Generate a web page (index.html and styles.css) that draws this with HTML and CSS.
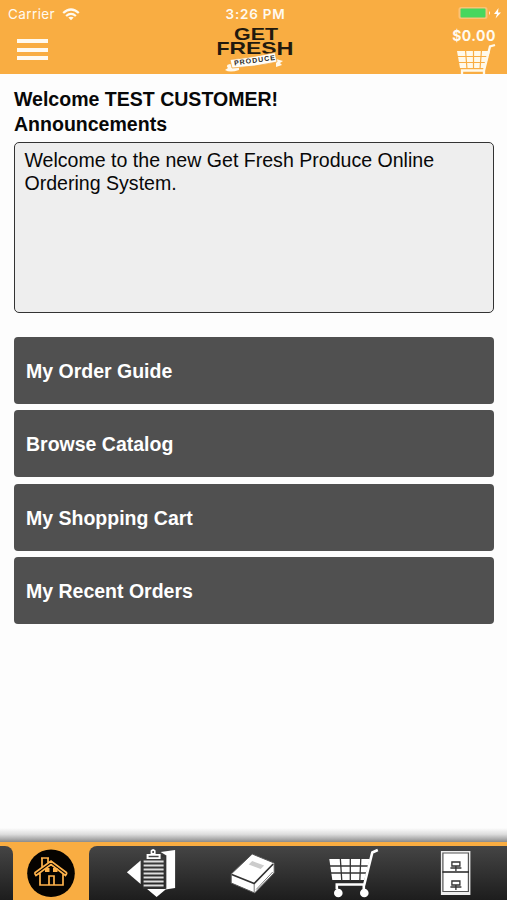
FILE: index.html
```
<!DOCTYPE html>
<html lang="en">
<head>
<meta charset="utf-8">
<title>Get Fresh Produce</title>
<link rel="stylesheet" href="styles.css">
</head>
<body>
<div class="app">
  <header class="header">
    <div class="side side-left">
      <div class="carrier"><span class="carrier-name">Carrier</span>
        <svg class="wifi" width="18" height="13" viewBox="0 0 18 13" fill="none" stroke="#fffaf0" stroke-width="2.3"><path d="M1.2 5Q9-2 16.8 5M4.1 8Q9 3.8 13.9 8"/><path d="M6.3 9.5Q9 7.8 11.7 9.5L9 12.3Z" fill="#fffaf0" stroke="none"/></svg>
      </div>
      <div class="menu"><i></i><i></i><i></i></div>
    </div>
    <div class="center">
      <div class="clock">3:26 PM</div>
      <svg class="logo" width="84" height="50" viewBox="214 24 84 50">
        <g fill="#22190e" font-family="Liberation Sans" font-weight="700">
          <text x="234" y="39.500" font-size="17" textLength="44" lengthAdjust="spacingAndGlyphs">GET</text>
          <text x="216.500" y="54.500" font-size="19" textLength="13" lengthAdjust="spacingAndGlyphs">F</text>
          <text x="229.500" y="54" font-size="17" textLength="47" lengthAdjust="spacingAndGlyphs">RES</text>
          <text x="276.500" y="54.500" font-size="19" textLength="17" lengthAdjust="spacingAndGlyphs">H</text>
        </g>
        <path d="M230 64Q225 65 228 68L225 70Q230 73 239 70V65ZM276 59L283 61L280 63L282 65L276 67Z" fill="#fff9ec"/>
        <path d="M230 59.500Q245 58.500 275 52.500L277 62Q255 67 232 68Z" fill="#fffdf7" stroke="#f1a743" stroke-width=".8"/>
        <text transform="translate(234.500 65.500) rotate(-8)" font-family="Liberation Sans" font-weight="700" font-size="7" fill="#2c2925" textLength="41">PRODUCE</text>
      </svg>
    </div>
    <div class="side side-right">
      <svg class="battery" width="45" height="14" viewBox="457 6 45 14"><rect x="458.500" y="7" width="29" height="12" rx="2.500" fill="#fbc276"/><rect x="460.500" y="8.500" width="25" height="9" rx="1" fill="#46d75e"/><path d="M489 11q2 2 0 4z" fill="#fff2dc"/><path d="M498.500 8L494 14H497L495.500 18.500L501 12.500H498Z" fill="#fff"/></svg>
      <div class="total">$0.00</div>
      <svg class="header-cart" width="42" height="31" viewBox="455 43 42 31"><path d="M457 51H490L485 68H460Z" fill="#fff9ea"/><path d="M457 56.500H489M458 62.500H488M465.500 50L467 69M473.500 50V69M481.500 50L480 69" stroke="#f9ad42" stroke-width="1.200"/><path d="M495 45L490 46.500L484 70.500H462V74M484 70V74" fill="none" stroke="#fff9ea" stroke-width="2.300"/></svg>
    </div>
  </header>
  <main class="main">
    <h1 class="title">Welcome TEST CUSTOMER!</h1>
    <h2 class="title">Announcements</h2>
    <div class="notice">Welcome to the new Get Fresh Produce Online<br>Ordering System.</div>
    <nav class="links">
      <a class="link">My Order Guide</a>
      <a class="link">Browse Catalog</a>
      <a class="link">My Shopping Cart</a>
      <a class="link">My Recent Orders</a>
    </nav>
  </main>
  <div class="fade"></div>
  <footer class="tabs">
    <div class="tab active">
      <span class="edge edge-left"></span>
      <svg class="home" width="76" height="54" viewBox="13 846 76 54"><circle cx="51" cy="873.300" r="23.800" fill="#050300"/><g fill="none" stroke="#ffb34b" stroke-width="1.700"><path d="M40 873V885H63V873M34.500 873L51 861L67 873M34.500 873L36 875.500L51 864.500L65.500 875.500L67 873M42 867V858H48V863M41 858H49M49 885V876H54V885"/><path d="M45 868H49.500V872H45ZM53 868H57.500V872H53Z" fill="#ffb34b" stroke="none"/></g></svg>
      <span class="edge edge-right"></span>
    </div>
    <div class="tab"><svg viewBox="101.400 846 101.400 54"><path d="M127.300 872.300L141 860.500V884Z" fill="#fff"/><path d="M161 852L175.500 850V888L166 889.500L157 897L147.500 889H166V855Z" fill="#fff"/><path d="M162 856H166V888H144V861" fill="none" stroke="#333" stroke-width="1.500"/><path d="M144 861.500H164M144 865.500H164M144 869.500H164M144 873.500H164M144 877.500H164M144 881.500H164M144 885.500H164" stroke="#dedede" stroke-width="2.200"/><path d="M147 854H151V850.500Q153.500 847.500 156 850.500V854H161V859H147Z" fill="#fff"/><path d="M149 856.500H159" stroke="#444" stroke-width="1.500"/><circle cx="153.500" cy="852" r="1" fill="#333"/></svg></div>
    <div class="tab"><svg viewBox="202.800 846 101.400 54"><path d="M231 874L252 854L274 863V873L254.500 893L231 883Z" fill="#fff" stroke="#555" stroke-width="1"/><path d="M231.500 874.500L254 883.500L273 864" fill="none" stroke="#333" stroke-width="1.700"/><path d="M254 884V892M256 889.500L272.500 872" stroke="#777" stroke-width="1"/><path d="M252 861L264 865.500L260.500 869L248.500 864.500Z" fill="#ccc"/></svg></div>
    <div class="tab"><svg viewBox="304.200 846 101.400 54"><path d="M329.500 859H370L364.500 880H332.500Z" fill="#fff"/><path d="M329 866H370M330 873H368M340.500 858L342 881M350.500 858V881M361 858L360 881" stroke="#343434" stroke-width="1.300"/><path d="M378 850L372.500 852.500L364.500 884.500H337V889M364 884V889" fill="none" stroke="#fff" stroke-width="2.600"/><circle cx="338.500" cy="893" r="4.300" fill="#fff"/><circle cx="364.500" cy="893" r="4.300" fill="#fff"/></svg></div>
    <div class="tab"><svg viewBox="405.600 846 101.400 54"><path d="M440.500 851H470V895H440.500Z" fill="#eee"/><path d="M442.500 853H468V891.500H442.500Z" fill="#fff" stroke="#555" stroke-width="1.200"/><path d="M442 872H468.500" stroke="#222" stroke-width="1.500"/><g fill="none" stroke="#333" stroke-width="1.300"><path d="M451.500 862H459.500V866H451.500ZM450 868H461M455.500 866V871M451.500 881H459.500V885H451.500ZM450 887H461M455.500 885V890"/></g></svg></div>
  </footer>
</div>
</body>
</html>
```

FILE: styles.css
```
* { box-sizing: border-box; }
body { margin: 0; background: #fdfdfd; font-family: "Liberation Sans", Arial, sans-serif; color: #080808; }
svg { display: block; }
.app { height: 900px; display: flex; flex-direction: column; }
.header { height: 74px; background: #f9ad42; display: flex; justify-content: space-between; color: #fffaf0; }
.side { width: 150px; }
.side-left { padding: 6px 0 0 8px; }
.carrier { display: flex; height: 16px; align-items: center; gap: 6px; font: 13.5px/16px Inter, sans-serif; letter-spacing: .4px; }
.carrier-name { width: 48px; white-space: nowrap; }
.menu { width: 31px; margin: 17px 0 0 9px; display: grid; gap: 4.500px; }
.menu i { height: 4px; background: #fffaf0; }
.center { width: 84px; margin-left: 4px; display: flex; flex-direction: column; align-items: center; }
.clock { height: 24px; padding-top: 4px; font: 600 13.500px/20px Inter, sans-serif; white-space: nowrap; letter-spacing: .75px; }
.side-right { display: flex; flex-direction: column; align-items: flex-end; padding-top: 6px; }
.battery { margin-right: 5px; }
.total { height: 23px; margin-right: 11px; font: 700 14px/31px Inter, sans-serif; letter-spacing: .5px; }
.header-cart { margin-right: 10px; }
.main { flex: 1; padding: 13px 13px 0 14px; }
.title { margin: 0; font-size: 19.550px; line-height: 24.500px; white-space: nowrap; }
.notice { height: 171px; margin-top: 5.500px; padding: 6px 9.500px; border: 1.500px solid #333; border-radius: 5px; background: #eee; font-size: 19.570px; line-height: 23px; white-space: nowrap; }
.links { margin-top: 24.500px; display: grid; gap: 6.400px; }
.link { height: 67px; padding: 2px 12px 0; display: flex; align-items: center; border-radius: 4px; background: #505050; color: #fff; font-size: 19.500px; font-weight: 700; }
.fade { height: 14px; background: linear-gradient(#fdfdfd, #ddd 45%, #8c8c8c); }
.tabs { height: 58px; padding-top: 4px; display: grid; grid-template-columns: repeat(5, 1fr); background: #f9ad42; }
.tab { background: linear-gradient(#454545, #1d1d1d); }
.tab svg { width: 100%; height: 54px; }
.tab.active { display: flex; background: none; }
.tab.active .home { width: 76px; }
.edge { background: linear-gradient(#454545, #1d1d1d); }
.edge-left { width: 13px; border-top-right-radius: 8px; }
.edge-right { flex: 1; border-top-left-radius: 8px; }
```
